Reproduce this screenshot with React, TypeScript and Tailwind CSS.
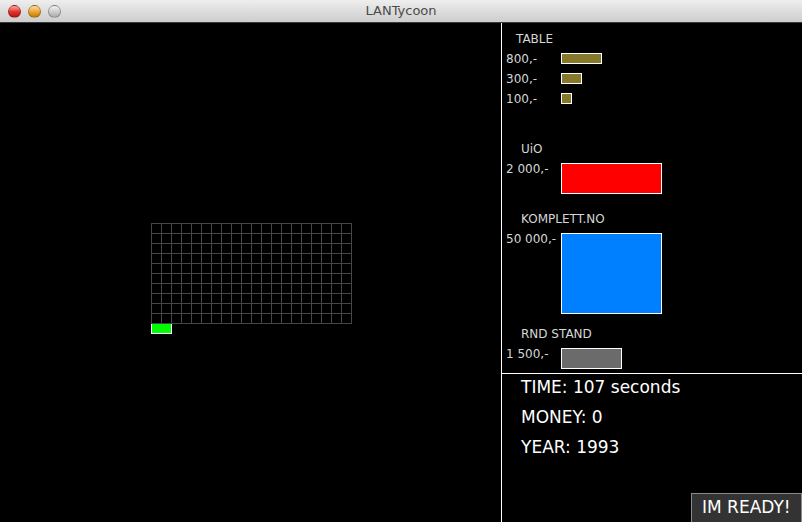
import React from 'react';

const tableRows = [
    { price: '800,-', width: 'w-[41px]' },
    { price: '300,-', width: 'w-[21px]' },
    { price: '100,-', width: 'w-[11px]' },
];

function Light({ color }: { color: string }) {
    return <div className={`h-[13px] w-[13px] rounded-full border border-black/30 ${color}`} />;
}

function Grid() {
    const lines = [];
    for (let i = 0; i <= 20; i++) {
        lines.push(<line key={'v' + i} x1={i * 10 + 0.5} y1={0} x2={i * 10 + 0.5} y2={101} />);
    }
    for (let j = 0; j <= 10; j++) {
        lines.push(<line key={'h' + j} x1={0} y1={j * 10 + 0.5} x2={201} y2={j * 10 + 0.5} />);
    }
    return (
        <svg width="201" height="101" stroke="#464646" strokeWidth="1" shapeRendering="crispEdges">
            {lines}
        </svg>
    );
}

function Label({ text, indent }: { text: string; indent: string }) {
    return <div className={`h-[13px] pt-[1px] leading-[12px] ${indent}`}>{text}</div>;
}

function PriceRow({ price, children }: { price: string; children: React.ReactNode }) {
    return (
        <div className="flex items-start">
            <div className="h-[10px] w-[59px] pl-[4px] leading-[12px] text-[12px] whitespace-nowrap">{price}</div>
            {children}
        </div>
    );
}

export default function App() {
    return (
        <div
            className="flex h-[522px] w-[802px] flex-col overflow-hidden bg-black"
            style={{ fontFamily: '"DejaVu Sans", sans-serif' }}
        >
            {/* window title bar */}
            <div className="grid h-[23px] grid-cols-[1fr_auto_1fr] items-center border-b border-[#3a3a3a] bg-gradient-to-b from-[#eeeeee] to-[#cdcdcd]">
                <div className="flex items-center gap-[7px] pl-[8px]">
                    <Light color="bg-gradient-to-b from-[#f7a3a3] via-[#e5352f] to-[#b8120d]" />
                    <Light color="bg-gradient-to-b from-[#fbe0a3] via-[#eeaa2f] to-[#c4780b]" />
                    <Light color="bg-gradient-to-b from-[#f3f3f3] via-[#cfcfcf] to-[#a9a9a9]" />
                </div>
                <div className="text-[13px] leading-[22px] text-[#4a4a4a]">LANTycoon</div>
                <div />
            </div>

            <div className="flex flex-1">
                {/* game board */}
                <div className="w-[502px] border-r border-white pl-[151px] pt-[200px]">
                    <Grid />
                    <div className="-mt-[1px] h-[11px] w-[21px] border border-white bg-[#00ff00]" />
                </div>

                {/* shop */}
                <div className="flex flex-1 flex-col text-[#d6d6d6]">
                    <div className="h-[351px] border-b border-white pt-[9px] text-[12px]">
                        <Label text="TABLE" indent="pl-[14px]" />
                        <div className="mt-[8px] flex flex-col gap-[9px]">
                            {tableRows.map((row) => (
                                <PriceRow key={row.price} price={row.price}>
                                    <div className={`h-[11px] border border-white bg-[#86792b] ${row.width}`} />
                                </PriceRow>
                            ))}
                        </div>

                        <div className="mt-[38px]">
                            <Label text="UiO" indent="pl-[19px]" />
                        </div>
                        <div className="mt-[8px]">
                            <PriceRow price="2 000,-">
                                <div className="h-[31px] w-[101px] border border-white bg-[#ff0000]" />
                            </PriceRow>
                        </div>

                        <div className="mt-[18px]">
                            <Label text="KOMPLETT.NO" indent="pl-[19px]" />
                        </div>
                        <div className="mt-[8px]">
                            <PriceRow price="50 000,-">
                                <div className="h-[81px] w-[101px] border border-white bg-[#0080ff]" />
                            </PriceRow>
                        </div>

                        <div className="mt-[13px]">
                            <Label text="RND STAND" indent="pl-[19px]" />
                        </div>
                        <div className="mt-[8px]">
                            <PriceRow price="1 500,-">
                                <div className="h-[21px] w-[61px] border border-white bg-[#6b6b6b]" />
                            </PriceRow>
                        </div>
                    </div>

                    <div className="flex flex-1 flex-col overflow-hidden text-[17px] text-white">
                        <div className="flex flex-col gap-[10px] pl-[19px] pt-[3px] leading-[20px]">
                            <div>TIME: 107 seconds</div>
                            <div>MONEY: 0</div>
                            <div>YEAR: 1993</div>
                        </div>
                        <button className="-mb-[1px] mt-auto flex h-[30px] w-[111px] items-center self-end border border-[#8a8a8a] bg-[#333333] px-[10px] text-[17px] text-white">
                            IM READY!
                        </button>
                    </div>
                </div>
            </div>
        </div>
    );
}
